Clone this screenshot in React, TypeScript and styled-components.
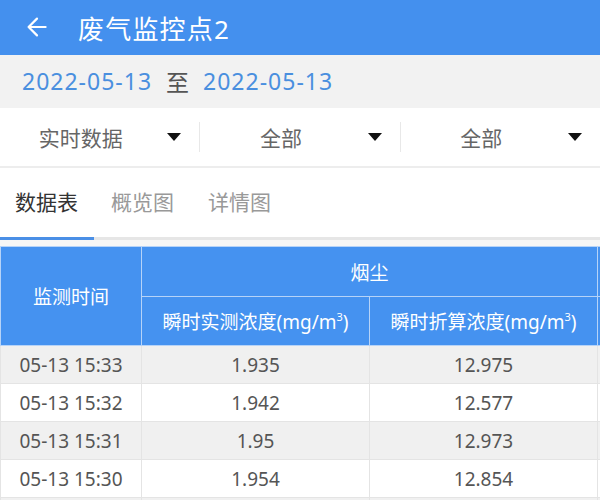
import React from "react";
import styled, { createGlobalStyle } from "styled-components";

const Global = createGlobalStyle`
  html, body { margin: 0; padding: 0; background: #ffffff; overflow: hidden; }
  body { font-family: "Noto Sans", "Noto Sans CJK SC", sans-serif; }
  * { box-sizing: border-box; }
`;

const Page = styled.div`
  width: 600px;
  height: 500px;
  overflow: hidden;
  display: flex;
  flex-direction: column;
`;

const AppBar = styled.header`
  height: 55px;
  background: #4490ee;
  display: flex;
  align-items: center;
  padding-left: 27px;
  color: #ffffff;
  flex-shrink: 0;
`;

const BackIcon = styled.svg`
  width: 20px;
  height: 20px;
  margin-right: 31px;
  margin-top: -2px;
`;

const Title = styled.h1`
  margin: 0;
  font-size: 26px;
  font-weight: 400;
  letter-spacing: 1.2px;
`;

const DateBar = styled.div`
  height: 53px;
  background: #f2f2f2;
  display: flex;
  align-items: center;
  padding-left: 22px;
  padding-bottom: 2px;
  font-size: 23px;
  flex-shrink: 0;
`;

const DateText = styled.span`
  color: #4a8fdf;
  letter-spacing: 1px;
`;

const DateSep = styled.span`
  color: #555555;
  margin: 0 14px 0 14px;
`;

const FilterBar = styled.div`
  height: 60px;
  background: #ffffff;
  display: flex;
  align-items: center;
  border-bottom: 2px solid #ededed;
  flex-shrink: 0;
`;

const Filter = styled.div<{ $divider?: boolean }>`
  flex: 1;
  height: 30px;
  display: flex;
  align-items: center;
  padding-right: 18px;
  border-left: ${(p) => (p.$divider ? "1px solid #e8e8e8" : "none")};
`;

const FilterLabel = styled.span`
  flex: 1;
  text-align: center;
  color: #666666;
  font-size: 21px;
  padding-right: 6px;
`;

const Caret = styled.span`
  width: 0;
  height: 0;
  border-left: 7px solid transparent;
  border-right: 7px solid transparent;
  border-top: 8px solid #111111;
`;

const Tabs = styled.nav`
  height: 72px;
  display: flex;
  align-items: stretch;
  border-bottom: 3px solid #e6e6e6;
  flex-shrink: 0;
`;

const Tab = styled.div<{ $active?: boolean }>`
  display: flex;
  align-items: center;
  padding: 0 17px 4px;
  font-size: 21px;
  color: ${(p) => (p.$active ? "#333333" : "#999999")};
  margin-bottom: -3px;
  border-bottom: 3px solid ${(p) => (p.$active ? "#4a8fe6" : "transparent")};
  &:first-child {
    padding-left: 15px;
    padding-right: 16px;
  }
`;

const Gap = styled.div`
  height: 6px;
  background: #f6f6f6;
  flex-shrink: 0;
`;

const TableWrap = styled.div`
  flex: 1;
  overflow: hidden;
`;

const Table = styled.table`
  border-collapse: collapse;
  table-layout: fixed;
  width: 610px;
  font-size: 19px;
`;

const HeadCell = styled.th<{ $h: number }>`
  height: ${(p) => p.$h}px;
  background: #4592f0;
  color: #ffffff;
  font-weight: 400;
  text-align: center;
  border: 1px solid #b6d3f8;
  white-space: nowrap;
  padding: 0;
`;

const Sup = styled.sup`
  font-size: 11px;
  vertical-align: 8px;
  line-height: 0;
`;

const Row = styled.tr<{ $odd: boolean }>`
  background: ${(p) => (p.$odd ? "#f0f0f0" : "#ffffff")};
`;

const Cell = styled.td`
  height: 38px;
  padding: 0;
  text-align: center;
  color: #555555;
  border: 1px solid #e4e4e4;
  white-space: nowrap;
`;

const rows = [
  ["05-13 15:33", "1.935", "12.975"],
  ["05-13 15:32", "1.942", "12.577"],
  ["05-13 15:31", "1.95", "12.973"],
  ["05-13 15:30", "1.954", "12.854"],
];

export default function App() {
  return (
    <Page>
      <Global />
      <AppBar>
        <BackIcon viewBox="0 0 20 20" fill="none" stroke="#ffffff" strokeWidth={2.2} strokeLinecap="round" strokeLinejoin="round">
          <path d="M18.6 10H1.6M10 1.6L1.6 10l8.4 8.4" />
        </BackIcon>
        <Title>废气监控点2</Title>
      </AppBar>
      <DateBar>
        <DateText>2022-05-13</DateText>
        <DateSep>至</DateSep>
        <DateText>2022-05-13</DateText>
      </DateBar>
      <FilterBar>
        <Filter>
          <FilterLabel>实时数据</FilterLabel>
          <Caret />
        </Filter>
        <Filter $divider>
          <FilterLabel>全部</FilterLabel>
          <Caret />
        </Filter>
        <Filter $divider>
          <FilterLabel>全部</FilterLabel>
          <Caret />
        </Filter>
      </FilterBar>
      <Tabs>
        <Tab $active>数据表</Tab>
        <Tab>概览图</Tab>
        <Tab>详情图</Tab>
      </Tabs>
      <Gap />
      <TableWrap>
        <Table>
          <colgroup>
            <col style={{ width: 141 }} />
            <col style={{ width: 228 }} />
            <col style={{ width: 228 }} />
            <col style={{ width: 13 }} />
          </colgroup>
          <thead>
            <tr>
              <HeadCell $h={50} rowSpan={2}>监测时间</HeadCell>
              <HeadCell $h={50} colSpan={2}>烟尘</HeadCell>
              <HeadCell $h={50} />
            </tr>
            <tr>
              <HeadCell $h={49}>
                瞬时实测浓度(mg/m<Sup>3</Sup>)
              </HeadCell>
              <HeadCell $h={49}>
                瞬时折算浓度(mg/m<Sup>3</Sup>)
              </HeadCell>
              <HeadCell $h={49} />
            </tr>
          </thead>
          <tbody>
            {rows.map((r, i) => (
              <Row key={r[0]} $odd={i % 2 === 0}>
                <Cell>{r[0]}</Cell>
                <Cell>{r[1]}</Cell>
                <Cell>{r[2]}</Cell>
                <Cell />
              </Row>
            ))}
            <Row $odd>
              <Cell />
              <Cell />
              <Cell />
              <Cell />
            </Row>
          </tbody>
        </Table>
      </TableWrap>
    </Page>
  );
}
